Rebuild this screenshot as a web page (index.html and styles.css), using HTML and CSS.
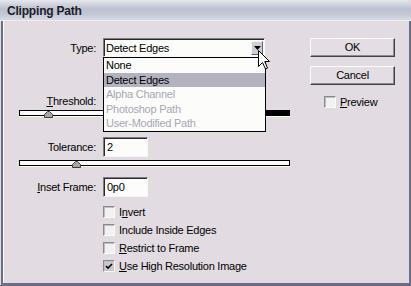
FILE: index.html
```html
<!DOCTYPE html>
<html>
<head>
<meta charset="utf-8">
<link rel="stylesheet" href="styles.css">
</head>
<body>
<div class="window">
  <div class="titlebar">Clipping Path</div>
  <div class="client">
    <div class="left">
      <div class="row row-type">
        <span class="label">Type:</span>
        <div class="select">
          <span class="select-text">Detect Edges</span>
          <span class="arrow"><svg width="7" height="4" viewBox="0 0 7 4"><path d="M0 0H7L3.5 4Z" fill="#000"/></svg></span>
          <ul class="list">
            <li>None</li>
            <li class="sel">Detect Edges</li>
            <li class="dis">Alpha Channel</li>
            <li class="dis">Photoshop Path</li>
            <li class="dis">User-Modified Path</li>
          </ul>
        </div>
      </div>
      <div class="row row-thresh">
        <span class="label"><u>T</u>hreshold:</span>
      </div>
      <div class="slider slider-dark">
        <span class="thumb" style="left:24px"><svg width="9" height="7" viewBox="0 0 9 7"><path d="M0.5 6.5V3.5L3.5 0.5H5.5L8.5 3.5V6.5Z" fill="#a8a6aa" stroke="#404040"/></svg></span>
      </div>
      <div class="row row-tol">
        <span class="label">Tolerance:</span>
        <div class="input">2</div>
      </div>
      <div class="slider slider-tol">
        <span class="thumb" style="left:52px"><svg width="9" height="7" viewBox="0 0 9 7"><path d="M0.5 6.5V3.5L3.5 0.5H5.5L8.5 3.5V6.5Z" fill="#a8a6aa" stroke="#404040"/></svg></span>
      </div>
      <div class="row row-inset">
        <span class="label"><u>I</u>nset Frame:</span>
        <div class="input">0p0</div>
      </div>
      <div class="checks">
        <div class="check"><span class="box"></span><span>I<u>n</u>vert</span></div>
        <div class="check"><span class="box"></span><span>Include Inside Edges</span></div>
        <div class="check"><span class="box"></span><span><u>R</u>estrict to Frame</span></div>
        <div class="check"><span class="box checked"><svg width="8" height="7" viewBox="0 0 8 7"><path d="M1 3L3 5L7 1" fill="none" stroke="#000" stroke-width="1.6"/></svg></span><span><u>U</u>se High Resolution Image</span></div>
      </div>
    </div>
    <div class="right">
      <div class="btn">OK</div>
      <div class="btn btn-cancel">Cancel</div>
      <div class="check preview"><span class="box"></span><span><u>P</u>review</span></div>
    </div>
  </div>
  <svg class="cursor" width="13" height="20" viewBox="0 0 13 20"><path d="M0.5 0.5V16.5L4.5 12.5L7.5 19L9.5 18L6.8 11.5H11.5Z" fill="#fff" stroke="#000" stroke-linejoin="miter"/></svg>
</div>
</body>
</html>
```
FILE: styles.css
```css
html, body {
  margin: 0;
  padding: 0;
  background: #e2dbe1;
}
body {
  font-family: "Liberation Sans", Arial, sans-serif;
  font-size: 11px;
  letter-spacing: -0.25px;
  color: #000;
}
.window {
  position: relative;
  width: 411px;
  height: 286px;
  display: flex;
  flex-direction: column;
  background: #e2dbe1;
  border-bottom: 1px solid #6b6e87;
  box-sizing: border-box;
  overflow: hidden;
}
.titlebar {
  height: 20px;
  flex: none;
  border-bottom: 1px solid #eeeef2;
  border-top-right-radius: 7px;
  background: linear-gradient(to bottom, #e6e8ee 0%, #d2d5df 20%, #bcc1d0 45%, #c3c7d4 70%, #d8dae2 100%);
  padding-left: 7px;
  font-weight: bold;
  font-size: 12px;
  line-height: 23px;
  color: #1c1c28;
  letter-spacing: -0.2px;
}
.client {
  flex: 1;
  margin-left: 1px;
  border-left: 2px solid #6b6e87;
  border-right: 2px solid #6b6e87;
  border-bottom: 2px solid #6b6e87;
  box-shadow: inset 1px 0 #fdfdfd, 0 1px 0 #fdfdfd;
  display: flex;
}
.left {
  width: 307px;
  padding-top: 17px;
  display: flex;
  flex-direction: column;
}
.row {
  display: flex;
  align-items: center;
}
.label {
  width: 93px;
  margin-right: 7px;
  text-align: right;
  flex: none;
}
.row-type { height: 19px; }
.select {
  position: relative;
  width: 162px;
  height: 19px;
  box-sizing: border-box;
  background: #fcfdfa;
  border: 1px solid;
  border-color: #7c7c84 #f8f8f8 #f8f8f8 #7c7c84;
  box-shadow: inset 1px 1px #2a2a2a;
}
.select-text {
  position: absolute;
  left: 2px;
  top: 2px;
  line-height: 15px;
}
.arrow {
  position: absolute;
  right: 1px;
  top: 2px;
  width: 12px;
  height: 14px;
  box-sizing: border-box;
  background: #cfcdd4;
  border: 1px solid;
  border-color: #f4f4f4 #606066 #606066 #f4f4f4;
  display: flex;
  align-items: center;
  justify-content: center;
}
.list {
  position: absolute;
  left: -1px;
  top: 18px;
  width: 163px;
  height: 75px;
  margin: 0;
  padding: 0;
  list-style: none;
  box-sizing: border-box;
  border: 1px solid #000;
  background: #fcfdfa;
  z-index: 2;
}
.list li {
  height: 14.6px;
  line-height: 14.6px;
  padding-left: 2px;
  white-space: nowrap;
}
.list li.sel { background: #b3b2c0; }
.list li.dis { color: #a7a6b6; }
.row-thresh {
  height: 19px;
  margin-top: 34px;
}
.slider {
  position: relative;
  margin-left: 16px;
  width: 271px;
  height: 6px;
  box-sizing: border-box;
  border: 1px solid #000;
  background: #fcfdfa;
  box-shadow: 0 1px 0 #fdfdfd;
  flex: none;
}
.slider-dark {
  background: linear-gradient(to right, #fcfdfa 0, #fcfdfa 246px, #000 246px);
}
.thumb {
  position: absolute;
  top: 0px;
  line-height: 0;
}
.row-tol {
  height: 20px;
  margin-top: 21px;
}
.input {
  width: 45px;
  height: 20px;
  box-sizing: border-box;
  background: #fcfdfa;
  border: 1px solid;
  border-color: #7c7c84 #f8f8f8 #f8f8f8 #7c7c84;
  box-shadow: inset 1px 1px #2a2a2a;
  padding-left: 3px;
  line-height: 18px;
}
.slider-tol { margin-top: 3px; }
.row-inset {
  height: 20px;
  margin-top: 11px;
}
.checks {
  margin-top: 6px;
  padding-left: 100px;
  display: flex;
  flex-direction: column;
}
.check {
  height: 18px;
  display: flex;
  align-items: center;
  gap: 4px;
}
.box {
  width: 12px;
  height: 12px;
  box-sizing: border-box;
  background: #f2f1f2;
  border: 1px solid;
  border-color: #8a8890 #fafafa #fafafa #8a8890;
  box-shadow: inset 1px 1px #c0bec4;
  display: flex;
  align-items: center;
  justify-content: center;
  flex: none;
}
.box.checked { background: #cac8cc; }
.right {
  width: 85px;
  padding-top: 17px;
  display: flex;
  flex-direction: column;
}
.btn {
  height: 19px;
  box-sizing: border-box;
  border: 1px solid;
  border-color: #fcfcfc #404046 #404046 #fcfcfc;
  box-shadow: inset -1px -1px #8e8c94;
  background: #e4dee4;
  text-align: center;
  line-height: 17px;
}
.btn-cancel { margin-top: 9px; }
.preview {
  margin-top: 8px;
  margin-left: 14px;
}
.cursor {
  position: absolute;
  left: 258px;
  top: 50px;
  z-index: 5;
}
```
